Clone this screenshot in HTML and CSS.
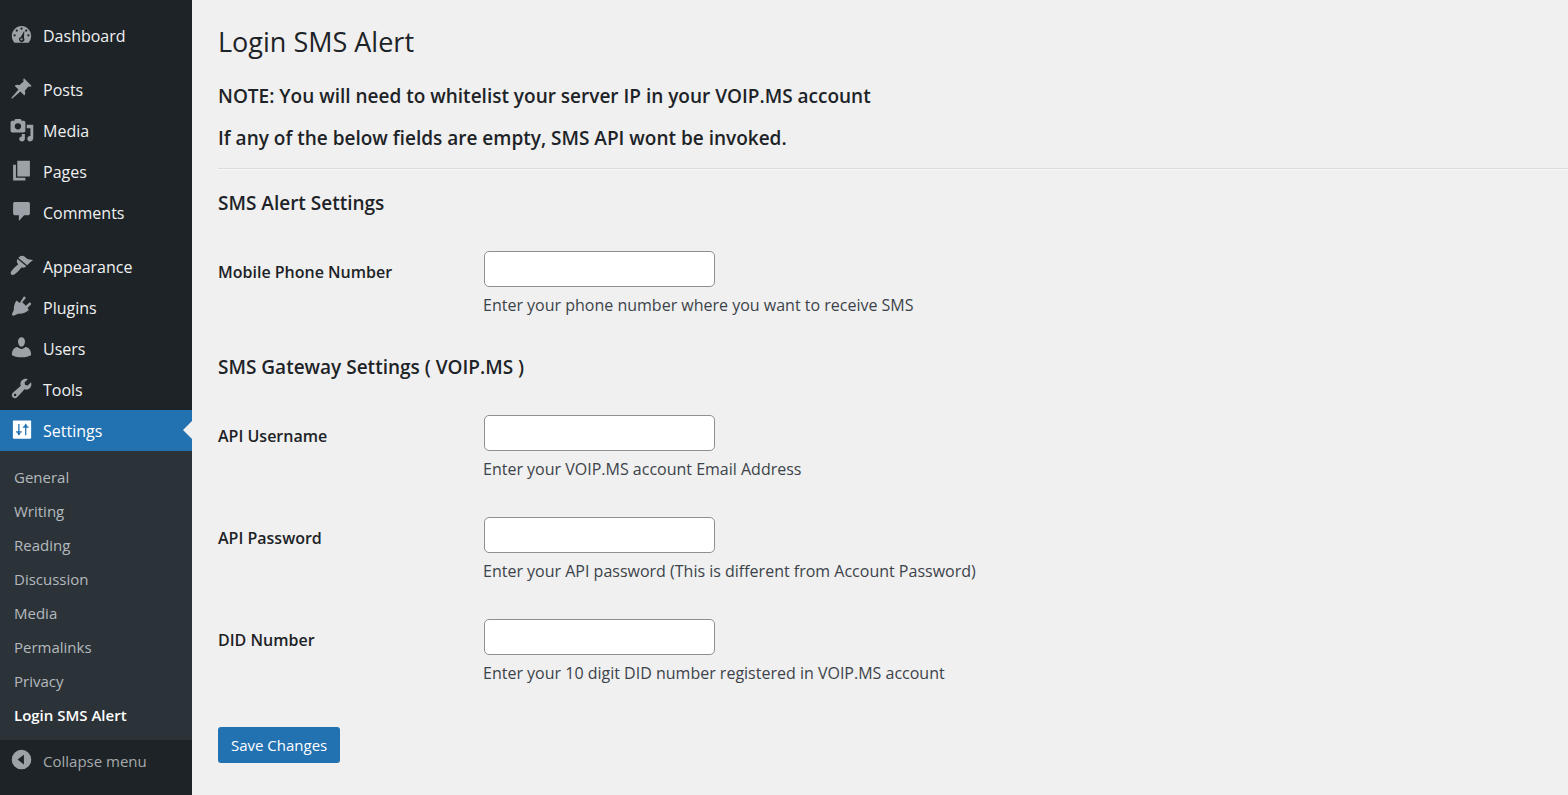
FILE: index.html
```html
<!DOCTYPE html>
<html lang="en">
<head>
<meta charset="utf-8">
<meta name="viewport" content="width=device-width, initial-scale=1">
<title>Login SMS Alert</title>
<link rel="stylesheet" href="styles.css">
</head>
<body class="admin">
<nav class="menu" aria-label="Main menu">
  <ul class="menu-list">
    <li><a class="menu-item" href="#"><svg class="icon" viewBox="0 0 20 20"><path fill-rule="evenodd" d="M3.300 17.800h13.400c1.500-1.400 2.500-3.900 2.500-6.500C19.200 6.200 15 1.900 10 1.900S.8 6.200.8 11.300c0 2.600 1 5.100 2.500 6.500zM10 3.300a1.100 1.100 0 1 1 0 2.200 1.100 1.100 0 0 1 0-2.200zM5.500 5.200a1.100 1.100 0 1 1 0 2.200 1.100 1.100 0 0 1 0-2.200zM14.500 5.200a1.100 1.100 0 1 1 0 2.200 1.100 1.100 0 0 1 0-2.200zM3.400 9.700a1.100 1.100 0 1 1 0 2.200 1.100 1.100 0 0 1 0-2.200zM16.600 9.700a1.100 1.100 0 1 1 0 2.200 1.100 1.100 0 0 1 0-2.200zM12.700 6.500l-.4 6.800a2.500 2.500 0 1 1-3-1zM10 13.500a1.100 1.100 0 1 0 0 2.200 1.100 1.100 0 0 0 0-2.200z"/></svg>Dashboard</a></li>
    <li class="menu-gap"><a class="menu-item" href="#"><svg class="icon" viewBox="0 0 20 20"><path d="M12.400.3c-.8.800-.9 2-.4 3L7.900 6.800C6.500 6 4.500 6.200 3.500 7.300l3.600 3.600L.2 19l.8.800 8-6.900 3.700 3.700c1-1.200 1.200-3 .4-4.300l3.500-4.200c1.100.5 2.300.4 3.100-.4z"/></svg>Posts</a></li>
    <li><a class="menu-item" href="#"><svg class="icon" viewBox="0 0 20 20"><path fill-rule="evenodd" d="M1.200 1.600h1.900L4 0h5.200l.9 1.600h2c.9 0 1.600.7 1.600 1.600v8c0 .9-.7 1.600-1.600 1.600H1.200c-.9 0-1.600-.7-1.600-1.600v-8c0-.9.7-1.600 1.600-1.600zM6.600 4a3 3 0 1 0 0 6 3 3 0 0 0 0-6z"/><path d="M15 5.500h6.200v12.700c0 1.900-1.200 3.200-2.900 3.200s-2.800-1.100-2.800-2.600c0-1.600 1.300-2.700 3-2.500V8.700H15z"/><path d="M10.300 14.200h2.900v4.700c0 1.500-1.200 2.500-2.700 2.500s-2.700-1-2.700-2.400c0-1.400 1.100-2.400 2.500-2.400z"/></svg>Media</a></li>
    <li><a class="menu-item" href="#"><svg class="icon" viewBox="0 0 20 20"><path d="M6 .8h12v14.800H6zM2 4.500h2.700v12.300h9V19.500H2z"/></svg>Pages</a></li>
    <li><a class="menu-item" href="#"><svg class="icon" viewBox="0 0 20 20"><path d="M3.500 1h13c.9 0 1.500.7 1.500 1.500v9.500c0 .9-.7 1.500-1.500 1.500H12.500L7.500 19v-5.500h-4c-.9 0-1.500-.7-1.500-1.500V2.500C2 1.700 2.700 1 3.500 1z"/></svg>Comments</a></li>
    <li class="menu-gap"><a class="menu-item" href="#"><svg class="icon" viewBox="0 0 20 20"><path d="M8.300 1.500c1.500-1 3.400-1 4.800.1l2.200 1.900c1.600.9 3.500.8 5.700 1.200-2 1.400-3.900 3.200-5.600 5L7 2.800zM6.200 3.800l8.400 7c-1.400 1.500-2.900 1.700-4.400.9l-4 4.600-3.100 2.300c-2 1.300-4.400-.9-3-3l2.500-3 4.300-3.800C5.400 7.300 5.200 5.300 6.200 3.800z"/></svg>Appearance</a></li>
    <li><a class="menu-item" href="#"><svg class="icon" viewBox="0 0 20 20"><path d="M12 .7c1-.9 2.600.7 1.800 1.700L10.700 6l3.500 3.400 3.100-3c1-.8 2.500.8 1.700 1.700l-3.300 3.300 1.300 2c-2.600 2.600-6 3.600-10.200 3.400l-3.200 1.600c-1.800 1.200-3.400-.6-2.300-2.300l1.400-2.700c-.2-3.300.6-6.500 2.600-9l3 2.200z"/></svg>Plugins</a></li>
    <li><a class="menu-item" href="#"><svg class="icon" viewBox="0 0 20 20"><path d="M10 .3c2 0 3.300 1.700 3.300 4 0 2.400-1.300 4.900-3.300 4.900S6.700 6.700 6.700 4.300c0-2.300 1.300-4 3.300-4zM6.200 9.600c1 1 2.300 1.800 3.800 1.800s2.800-.8 3.800-1.800c3.500.4 5.300 3.100 5.400 7.600-2 1.600-5.300 2.200-9.200 2.200S2.800 18.800.8 17.200c.1-4.500 1.900-7.200 5.400-7.600z"/></svg>Users</a></li>
    <li><a class="menu-item" href="#"><svg class="icon" viewBox="0 0 20 20"><path fill-rule="evenodd" d="M16 1.100 12.900 4.200l.5 2.500 2.500.5L19 4.100c.9 2.100.3 4.300-1.100 5.700-1.400 1.300-3.300 1.600-5 1l-6.800 7.300c-1.300 1.600-3.200 1.500-4.400.3s-1.300-3.100.1-4.400L9.300 7.300c-.7-1.700-.3-3.700 1.100-5.100 1.500-1.500 3.600-2 5.600-1.100zM3.900 15a1.200 1.200 0 1 0 0 2.400 1.200 1.200 0 0 0 0-2.400z"/></svg>Tools</a></li>
    <li>
      <a class="menu-item menu-item-current" href="#" aria-current="true"><svg class="icon" viewBox="0 0 20 20"><path d="M2.700 1.500h15.600c.5 0 .9.400.9.900v15.400c0 .5-.4.900-.9.900H2.700c-.5 0-.9-.4-.9-.9V2.400c0-.5.4-.9.900-.9z"/><path class="icon-bars" d="M7.500 4.800V15M4.800 12.300h5.400M14 5.500v10M11.300 7.800h5.400"/><path class="icon-tips" d="M5.500 12.800h4l-2 3zM12 7.300h4l-2-3z"/></svg>Settings</a>
      <ul class="submenu">
        <li><a class="submenu-item" href="#">General</a></li>
        <li><a class="submenu-item" href="#">Writing</a></li>
        <li><a class="submenu-item" href="#">Reading</a></li>
        <li><a class="submenu-item" href="#">Discussion</a></li>
        <li><a class="submenu-item" href="#">Media</a></li>
        <li><a class="submenu-item" href="#">Permalinks</a></li>
        <li><a class="submenu-item" href="#">Privacy</a></li>
        <li><a class="submenu-item submenu-item-current" href="#" aria-current="page">Login SMS Alert</a></li>
      </ul>
    </li>
  </ul>
  <button class="menu-item collapse" type="button"><svg class="icon" viewBox="0 0 20 20"><path fill-rule="evenodd" d="M10 .8a9.300 9.300 0 1 1 0 18.600A9.300 9.300 0 0 1 10 .8zM12.300 5.400v9.400L6.300 10.100z"/></svg>Collapse menu</button>
</nav>
<main class="content">
  <h1 class="page-title">Login SMS Alert</h1>
  <h3 class="note">NOTE: You will need to whitelist your server IP in your VOIP.MS account</h3>
  <h3 class="note">If any of the below fields are empty, SMS API wont be invoked.</h3>
  <hr class="rule">
  <form class="form">
    <h2 class="section-title">SMS Alert Settings</h2>
    <table class="fields">
      <tr>
        <th scope="row"><label for="phone">Mobile Phone Number</label></th>
        <td><input class="text-input" id="phone" type="text"><p class="description">Enter your phone number where you want to receive SMS</p></td>
      </tr>
    </table>
    <h2 class="section-title">SMS Gateway Settings ( VOIP.MS )</h2>
    <table class="fields">
      <tr>
        <th scope="row"><label for="user">API Username</label></th>
        <td><input class="text-input" id="user" type="text"><p class="description">Enter your VOIP.MS account Email Address</p></td>
      </tr>
      <tr>
        <th scope="row"><label for="pass">API Password</label></th>
        <td><input class="text-input" id="pass" type="password"><p class="description">Enter your API password (This is different from Account Password)</p></td>
      </tr>
      <tr>
        <th scope="row"><label for="did">DID Number</label></th>
        <td><input class="text-input" id="did" type="text"><p class="description">Enter your 10 digit DID number registered in VOIP.MS account</p></td>
      </tr>
    </table>
    <button class="save" type="button">Save Changes</button>
  </form>
</main>
</body>
</html>
```
FILE: styles.css
```css
* {
  box-sizing: border-box;
}

.admin {
  display: flex;
  min-height: 100vh;
  margin: 0;
  background: #f0f0f0;
  color: #1d2327;
  font-family: "Open Sans", "Noto Sans", sans-serif;
  font-size: 16px;
  line-height: 24px;
}

.menu {
  flex: none;
  width: 192px;
  padding-top: 15px;
  background: #1d2327;
}

.menu-list,
.submenu {
  margin: 0;
  padding: 0;
  list-style: none;
}

.menu-gap {
  margin-top: 13px;
}

.menu-item {
  position: relative;
  display: flex;
  align-items: center;
  gap: 11px;
  width: 100%;
  height: 41px;
  padding: 0 0 0 11px;
  color: #f0f0f1;
  font: inherit;
  text-decoration: none;
}

.icon {
  flex: none;
  width: 21px;
  height: 21px;
  margin-bottom: 2px;
  overflow: visible;
  fill: #9ca2a7;
}

.menu-item-current {
  background: #2271b1;
  color: #fff;
}

.menu-item-current .icon {
  fill: #fff;
}

.icon-bars {
  fill: none;
  stroke: #2271b1;
  stroke-width: 1.2;
}

.icon-tips {
  fill: #2271b1;
}

.menu-item-current::after {
  content: "";
  position: absolute;
  top: 11px;
  right: 0;
  border: solid transparent;
  border-width: 9px 9px 9px 0;
  border-right-color: #f0f0f0;
}

.submenu {
  padding: 9px 0 8px;
  background: #2c3338;
}

.submenu-item {
  display: block;
  padding: 5px 14px;
  color: #b4b9be;
  font-size: 15px;
  text-decoration: none;
}

.submenu-item-current {
  color: #fff;
  font-weight: 600;
}

.collapse {
  border: 0;
  background: none;
  color: #a7aaad;
  font-size: 15px;
  cursor: pointer;
}

.content {
  flex: 1;
  min-width: 0;
  padding: 22px 0 32px 26px;
}

.page-title {
  margin: 0 0 20px;
  font-size: 27px;
  font-weight: 400;
  line-height: 40px;
}

.note,
.section-title {
  margin: 0 0 14px;
  font-size: 19px;
  font-weight: 600;
  line-height: 28px;
}

.rule {
  margin: 16px 0 19px;
  border: 0;
  border-top: 1px solid #dcdcde;
  border-bottom: 1px solid #f6f7f7;
}

.section-title {
  margin: 18px 0 16px;
}

.fields {
  width: 100%;
  border-spacing: 0;
}

.fields th {
  width: 265px;
  padding: 27px 0 0;
  font-weight: 600;
  text-align: left;
  vertical-align: top;
}

.fields td {
  padding: 18px 0;
}

.text-input {
  display: block;
  width: 231px;
  height: 36px;
  margin: 0 1px;
  padding: 0 8px;
  border: 1px solid #8c8f94;
  border-radius: 5px;
  background: #fff;
  font: inherit;
}

.description {
  margin: 6px 0 0;
  color: #3c434a;
}

.save {
  height: 36px;
  margin-top: 24px;
  padding: 0 13px;
  border: 0;
  border-radius: 3px;
  background: #2271b1;
  color: #fff;
  font: inherit;
  font-size: 15px;
  cursor: pointer;
}
```
